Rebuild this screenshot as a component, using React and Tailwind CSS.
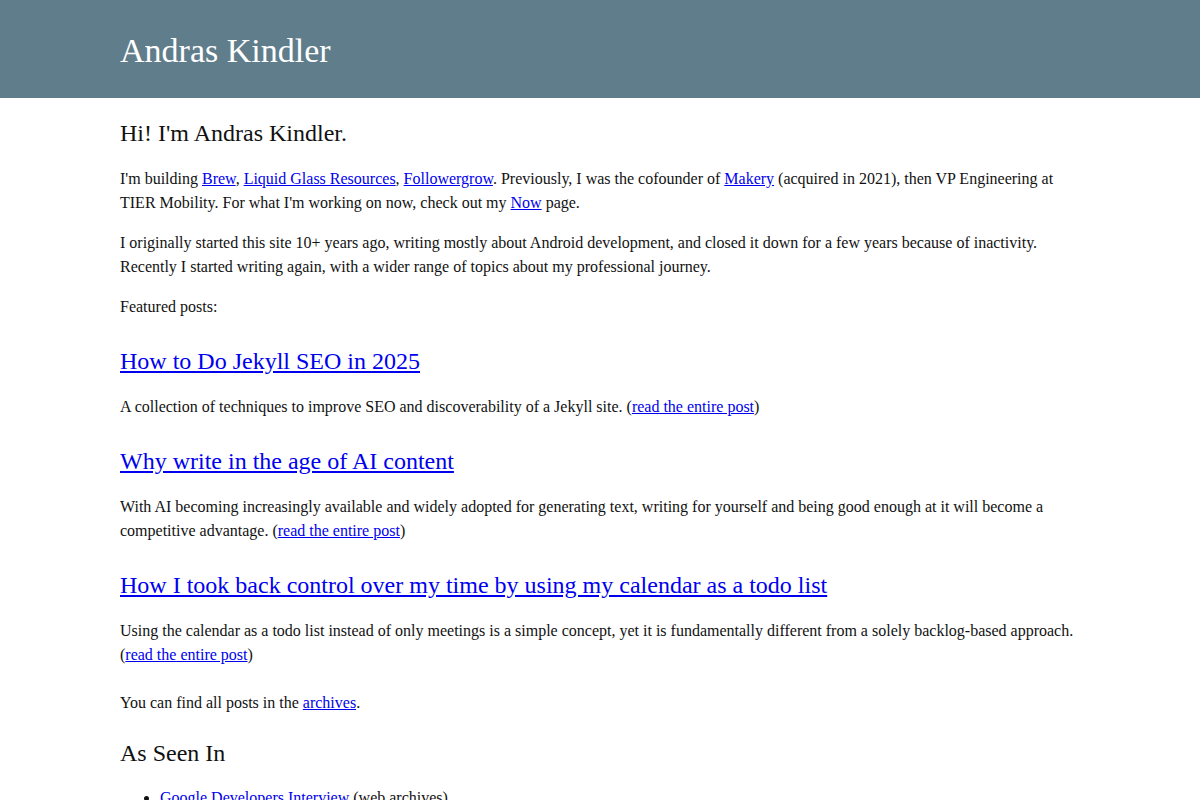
const posts = [
  {
    title: 'How to Do Jekyll SEO in 2025',
    summary: 'A collection of techniques to improve SEO and discoverability of a Jekyll site.',
  },
  {
    title: 'Why write in the age of AI content',
    summary:
      'With AI becoming increasingly available and widely adopted for generating text, writing for yourself and being good enough at it will become a competitive advantage.',
  },
  {
    title: 'How I took back control over my time by using my calendar as a todo list',
    summary:
      'Using the calendar as a todo list instead of only meetings is a simple concept, yet it is fundamentally different from a solely backlog-based approach.',
  },
];

function A({ children }) {
  return (
    <a href="#" className="text-[#0000ee] underline">
      {children}
    </a>
  );
}

export default function App() {
  return (
    <div className="min-h-screen bg-white text-[#111] font-['Liberation_Serif','Times_New_Roman',serif] text-base leading-6">
      <header className="bg-[#607d8b] h-[98px] flex items-center">
        <div className="w-[960px] mx-auto">
          <h1 className="text-white text-[34px] leading-10 pt-[3px]">Andras Kindler</h1>
        </div>
      </header>

      <main className="w-[960px] mx-auto">
        <h2 className="text-2xl leading-8 mt-[19px] mb-[18px]">Hi! I'm Andras Kindler.</h2>

        <p>
          I'm building <A>Brew</A>, <A>Liquid Glass Resources</A>, <A>Followergrow</A>. Previously, I
          was the cofounder of <A>Makery</A> (acquired in 2021), then VP Engineering at TIER Mobility.
          For what I'm working on now, check out my <A>Now</A> page.
        </p>

        <p className="mt-4">
          I originally started this site 10+ years ago, writing mostly about Android development, and
          closed it down for a few years because of inactivity. Recently I started writing again, with a
          wider range of topics about my professional journey.
        </p>

        <p className="mt-4">Featured posts:</p>

        {posts.map((post) => (
          <div key={post.title}>
            <h2 className="text-2xl leading-8 mt-[26px] mb-[18px]">
              <A>{post.title}</A>
            </h2>
            <p>
              {post.summary} (<A>read the entire post</A>)
            </p>
          </div>
        ))}

        <p className="mt-6">
          You can find all posts in the <A>archives</A>.
        </p>

        <h2 className="text-2xl leading-8 mt-[22px] mb-[17px]">As Seen In</h2>

        <ul className="list-disc pl-10">
          <li>
            <A>Google Developers Interview</A> (web archives)
          </li>
        </ul>
      </main>
    </div>
  );
}
